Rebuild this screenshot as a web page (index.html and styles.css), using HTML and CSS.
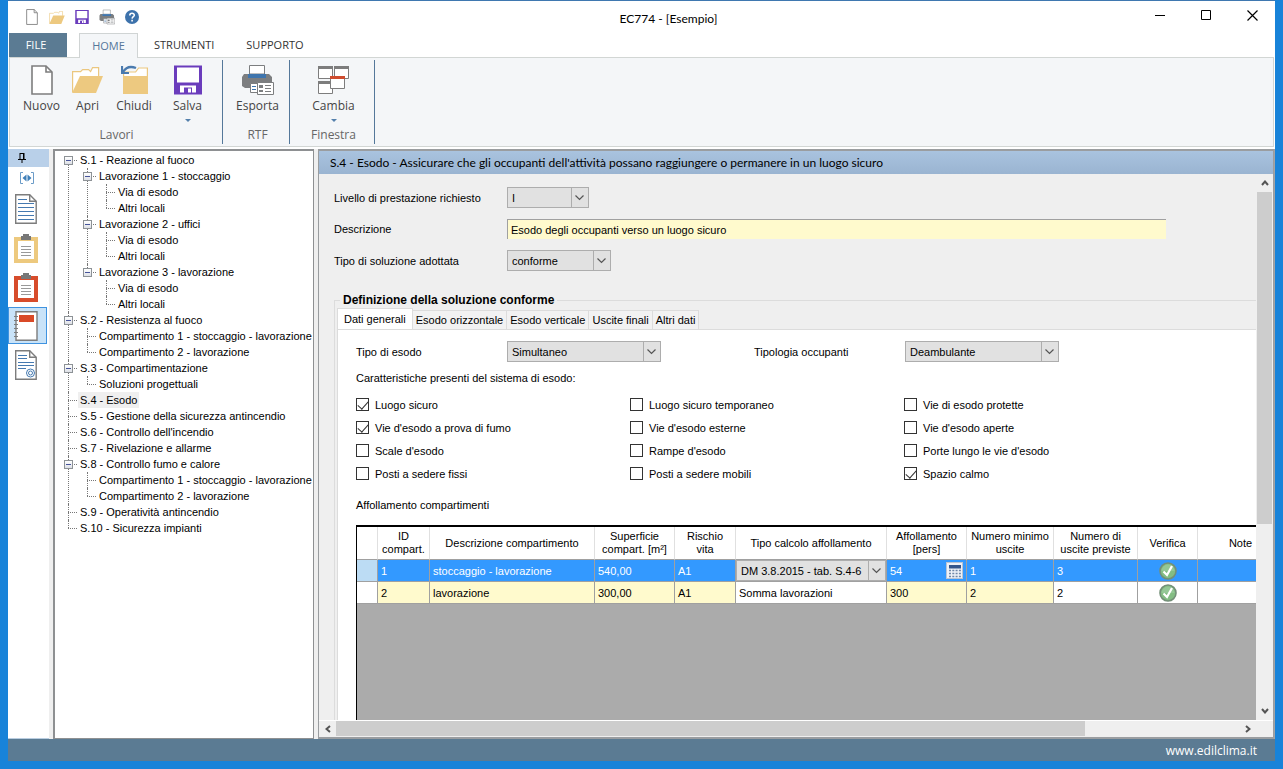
FILE: index.html
```html
<!DOCTYPE html>
<html lang="it">
<head>
<meta charset="utf-8">
<title>EC774 - [Esempio]</title>
<link rel="stylesheet" href="styles.css">
</head>
<body>
<svg class="defs" aria-hidden="true">
  <symbol id="i-new" viewBox="0 0 22 30"><path d="M1 1h14l6 6v22H1z" fill="#fff" stroke="#7d7d7d" stroke-width="1.6"/><path d="M15 1v6h6" fill="none" stroke="#7d7d7d" stroke-width="1.6"/></symbol>
  <symbol id="i-open" viewBox="0 0 31 26"><path d="M.6 25V4.600h8l2-2h6l2 2h0l2-4h6v9" fill="#fff" stroke="#ebc77f" stroke-width="1.2"/><path d="M8 9h23l-7 17H0z" fill="#edc980"/></symbol>
  <symbol id="i-close" viewBox="0 0 27 30"><path d="M2.600 13V7h12l3-4h8.800v10" fill="#fff" stroke="#ebc77f" stroke-width="1.2"/><path d="M2 11h25v18H2z" fill="#edc980"/><path d="M2 7C5 2 10 1 15 3" fill="none" stroke="#4a7aae" stroke-width="2.4"/><path d="M1 1v7h7" fill="none" stroke="#4a7aae" stroke-width="2.2"/></symbol>
  <symbol id="i-save" viewBox="0 0 28 29"><path d="M0 0h28v29H0z" fill="#6a3cbc"/><path d="M3 2h22v15H3zM6 20h16v7H6z" fill="#fff"/><path d="M10 22h8v6h-8z" fill="#6a3cbc"/><path d="M14 23h3v4h-3z" fill="#fff"/></symbol>
  <symbol id="i-print" viewBox="0 0 33 30"><path d="M3 9h5v4h15V9h5l3 3v9l-3 2H4l-3-2v-9z" fill="#7c7e80"/><path d="M8.500.5h15V9h-15z" fill="#fff" stroke="#7c7e80"/><path d="M7 9h18v4H7z" fill="#3f75ad"/><path d="M9.500 18.500h8v9h-8z" fill="#fff" stroke="#7c7e80"/><path d="M11 21.500h4M11 24.500h4" stroke="#3f75ad"/><path d="M16.500 17.500h16v12h-16z" fill="#fff" stroke="#7c7e80"/><path d="M18 20h4v3h-4zM18 25h4v2h-4z" fill="#7c7e80"/><path d="M24 20.500h6M24 23.500h6M24 26.500h6" stroke="#7c7e80"/></symbol>
  <symbol id="i-windows" viewBox="0 0 32 28"><g fill="#fff" stroke="#7d7d7d"><path d="M.5.5h14v12H.5zM16.500.5h14v12h-14zM.5 15.500h14v12H.5z"/></g><path d="M0 0h15v3H0zM16 0h15v3H16zM0 15h15v3H0z" fill="#7d7d7d"/><path d="M12.500 10.500h14v12h-14z" fill="#fff" stroke="#7d7d7d"/><path d="M12 10h15v3H12z" fill="#cf4c2e"/></symbol>
  <symbol id="i-clip" viewBox="0 0 24 29"><path d="M0 3h24v26H0z" fill="currentColor"/><path d="M4 7h16v18H4z" fill="#fff"/><path d="M7 2h2V0h6v2h2v4H7z" fill="#777"/><path d="M7 12.500h10M7 15.500h10M7 18.500h10M7 21.500h10" stroke="#999" stroke-width="1.2"/></symbol>
  <symbol id="i-check" viewBox="0 0 18 18"><circle cx="9" cy="9" r="8" fill="#83bd83" stroke="#738f78" stroke-width="1.600"/><path d="M2.500 9a6.500 6.500 0 0 1 13 0z" fill="#94c796"/><path d="M4.500 9.500 8 13l5-9" fill="none" stroke="#fff" stroke-width="2.200"/></symbol>
  <symbol id="i-chev" viewBox="0 0 9 6"><path d="m.5.5 4 4 4-4" fill="none" stroke="#555" stroke-width="1.2"/></symbol>
  <symbol id="i-scroll" viewBox="0 0 8 6"><path d="m1 5 3-3.500L7 5" fill="none" stroke="#555" stroke-width="2"/></symbol>
</svg>

<div class="window">
  <header class="titlebar">
    <div class="quick">
      <button class="qbtn" aria-label="Nuovo"><svg class="q-new"><use href="#i-new"/></svg></button>
      <button class="qbtn" aria-label="Apri"><svg class="q-open"><use href="#i-open"/></svg></button>
      <button class="qbtn" aria-label="Salva"><svg class="q-save"><use href="#i-save"/></svg></button>
      <button class="qbtn" aria-label="Esporta"><svg class="q-print"><use href="#i-print"/></svg></button>
      <button class="qbtn" aria-label="Guida"><svg class="q-help" viewBox="0 0 14 14"><circle cx="7" cy="7" r="7" fill="#3d72ab"/><path d="M4.800 5.500C4.800 2.500 9.400 2.700 9.300 5.300 9.200 6.800 7.200 6.700 7.100 8.600M7.100 9.800v1.700" fill="none" stroke="#fff" stroke-width="1.600"/></svg></button>
    </div>
    <h1 class="title">EC774 - [Esempio]</h1>
    <div class="controls">
      <button aria-label="Riduci"><svg viewBox="0 0 11 11"><path d="M0 5.500h10" stroke="#000"/></svg></button>
      <button aria-label="Ingrandisci"><svg viewBox="0 0 11 11"><path d="M.5.5h9v9h-9z" fill="none" stroke="#000"/></svg></button>
      <button aria-label="Chiudi finestra"><svg viewBox="0 0 11 11"><path d="m.5.5 10 10m0-10-10 10" stroke="#000" stroke-width="1.200"/></svg></button>
    </div>
  </header>

  <nav class="menu">
    <button class="file">FILE</button>
    <button class="active">HOME</button>
    <button>STRUMENTI</button>
    <button>SUPPORTO</button>
  </nav>

  <section class="ribbon">
    <div class="group g-lavori">
      <div class="tools">
        <button class="tool t-nuovo"><svg class="r-new"><use href="#i-new"/></svg><span>Nuovo</span></button>
        <button class="tool t-apri"><svg class="r-open"><use href="#i-open"/></svg><span>Apri</span></button>
        <button class="tool t-chiudi"><svg class="r-close"><use href="#i-close"/></svg><span>Chiudi</span></button>
        <button class="tool t-salva"><svg class="r-save"><use href="#i-save"/></svg><span>Salva</span><i class="drop"></i></button>
      </div>
      <div class="group-name">Lavori</div>
    </div>
    <div class="group g-rtf">
      <div class="tools"><button class="tool"><svg class="r-print"><use href="#i-print"/></svg><span>Esporta</span></button></div>
      <div class="group-name">RTF</div>
    </div>
    <div class="group g-finestra">
      <div class="tools"><button class="tool"><svg class="r-windows"><use href="#i-windows"/></svg><span>Cambia</span><i class="drop"></i></button></div>
      <div class="group-name">Finestra</div>
    </div>
  </section>

  <div class="main">
    <aside class="strip">
      <button class="pin" aria-label="Blocca"><svg viewBox="0 0 8 10"><path d="M2 0v6M2 .5h3.500M0 6.500h8M4 7v3" fill="none" stroke="#000"/><path d="M5 0h1.500v6H5z"/></svg></button>
      <button class="expand" aria-label="Espandi"><svg viewBox="0 0 14 12"><path d="M3 .5H.5v11H3M11 .5h2.500v11H11" fill="none" stroke="#6c9cc8"/><path d="M6.500 2.500 2.500 6l4 3.500zM7.500 2.500l4 3.500-4 3.500z" fill="#3f7fb8"/></svg></button>
      <button class="side" aria-label="Documento"><svg class="s-doc" viewBox="0 0 22 30"><path d="M.7.700h14l6.500 6.500v22H.7z" fill="#fff" stroke="#7d7d7d" stroke-width="1.400"/><path d="M14.700.700v6.500h6.500" fill="none" stroke="#7d7d7d" stroke-width="1.400"/><path d="M3 5.500h9M3 9.500h16M3 13.500h16M3 17.500h16M3 21.500h16M3 25.500h16" stroke="#4579b0"/></svg></button>
      <button class="side" aria-label="Appunti"><svg class="s-clip tan"><use href="#i-clip"/></svg></button>
      <button class="side" aria-label="Verifiche"><svg class="s-clip red"><use href="#i-clip"/></svg></button>
      <button class="side selected" aria-label="Strategia"><svg class="s-note" viewBox="0 0 24 30"><path d="M2 .7h21v28.600H2z" fill="#fff" stroke="#7d7d7d" stroke-width="1.400"/><path d="M5 4h15v7H5z" fill="#d94a28"/><path d="M0 5.500h4M0 9.500h4M0 13.500h4M0 17.500h4M0 21.500h4M0 25.500h4" stroke="#7d7d7d"/></svg></button>
      <button class="side" aria-label="Certificato"><svg class="s-doc" viewBox="0 0 22 30"><path d="M.7.700h14l6.500 6.500v22H.7z" fill="#fff" stroke="#7d7d7d" stroke-width="1.400"/><path d="M14.700.700v6.500h6.500" fill="none" stroke="#7d7d7d" stroke-width="1.400"/><path d="M3 5.500h9M3 8.500h9M3 12.500h16M3 15.500h16M3 18.500h8" stroke="#4579b0"/><circle cx="15.500" cy="23" r="4" fill="#fff" stroke="#4579b0"/><circle cx="15.500" cy="23" r="2" fill="none" stroke="#4579b0"/></svg></button>
    </aside>

    <nav class="tree-pane">
      <ul class="tree">
        <li><div class="row"><button class="toggle" aria-label="Comprimi"></button><span>S.1 - Reazione al fuoco</span></div>
          <ul>
            <li><div class="row"><button class="toggle" aria-label="Comprimi"></button><span>Lavorazione 1 - stoccaggio</span></div>
              <ul><li><div class="row"><span>Via di esodo</span></div></li><li><div class="row"><span>Altri locali</span></div></li></ul></li>
            <li><div class="row"><button class="toggle" aria-label="Comprimi"></button><span>Lavorazione 2 - uffici</span></div>
              <ul><li><div class="row"><span>Via di esodo</span></div></li><li><div class="row"><span>Altri locali</span></div></li></ul></li>
            <li><div class="row"><button class="toggle" aria-label="Comprimi"></button><span>Lavorazione 3 - lavorazione</span></div>
              <ul><li><div class="row"><span>Via di esodo</span></div></li><li><div class="row"><span>Altri locali</span></div></li></ul></li>
          </ul></li>
        <li><div class="row"><button class="toggle" aria-label="Comprimi"></button><span>S.2 - Resistenza al fuoco</span></div>
          <ul><li><div class="row"><span>Compartimento 1 - stoccaggio - lavorazione</span></div></li><li><div class="row"><span>Compartimento 2 - lavorazione</span></div></li></ul></li>
        <li><div class="row"><button class="toggle" aria-label="Comprimi"></button><span>S.3 - Compartimentazione</span></div>
          <ul><li><div class="row"><span>Soluzioni progettuali</span></div></li></ul></li>
        <li><div class="row"><span class="current">S.4 - Esodo</span></div></li>
        <li><div class="row"><span>S.5 - Gestione della sicurezza antincendio</span></div></li>
        <li><div class="row"><span>S.6 - Controllo dell'incendio</span></div></li>
        <li><div class="row"><span>S.7 - Rivelazione e allarme</span></div></li>
        <li><div class="row"><button class="toggle" aria-label="Comprimi"></button><span>S.8 - Controllo fumo e calore</span></div>
          <ul><li><div class="row"><span>Compartimento 1 - stoccaggio - lavorazione</span></div></li><li><div class="row"><span>Compartimento 2 - lavorazione</span></div></li></ul></li>
        <li><div class="row"><span>S.9 - Operatività antincendio</span></div></li>
        <li><div class="row"><span>S.10 - Sicurezza impianti</span></div></li>
      </ul>
    </nav>

    <main class="content">
      <h2 class="heading">S.4 - Esodo - Assicurare che gli occupanti dell'attività possano raggiungere o permanere in un luogo sicuro</h2>
      <div class="view">
        <div class="page">
          <div class="form">
            <label for="livello">Livello di prestazione richiesto</label>
            <span class="combo w-small"><select id="livello"><option>I</option></select><svg class="chev"><use href="#i-chev"/></svg></span>
            <label for="descr">Descrizione</label>
            <input class="text" id="descr" type="text" value="Esodo degli occupanti verso un luogo sicuro">
            <label for="tipo">Tipo di soluzione adottata</label>
            <span class="combo w-medium"><select id="tipo"><option>conforme</option></select><svg class="chev"><use href="#i-chev"/></svg></span>
          </div>

          <fieldset class="solution">
            <legend>Definizione della soluzione conforme</legend>
            <div class="tabs" role="tablist">
              <button role="tab" aria-selected="true" class="on">Dati generali</button>
              <button role="tab">Esodo orizzontale</button>
              <button role="tab">Esodo verticale</button>
              <button role="tab">Uscite finali</button>
              <button role="tab">Altri dati</button>
            </div>
            <div class="panel">
              <div class="pair">
                <label for="esodo">Tipo di esodo</label>
                <span class="combo w-large"><select id="esodo"><option>Simultaneo</option></select><svg class="chev"><use href="#i-chev"/></svg></span>
                <label for="occupanti">Tipologia occupanti</label>
                <span class="combo w-large"><select id="occupanti"><option>Deambulante</option></select><svg class="chev"><use href="#i-chev"/></svg></span>
              </div>
              <p class="caption">Caratteristiche presenti del sistema di esodo:</p>
              <div class="checks">
                <label><input type="checkbox" checked>Luogo sicuro</label>
                <label><input type="checkbox">Luogo sicuro temporaneo</label>
                <label><input type="checkbox">Vie di esodo protette</label>
                <label><input type="checkbox" checked>Vie d'esodo a prova di fumo</label>
                <label><input type="checkbox">Vie d'esodo esterne</label>
                <label><input type="checkbox">Vie d'esodo aperte</label>
                <label><input type="checkbox">Scale d'esodo</label>
                <label><input type="checkbox">Rampe d'esodo</label>
                <label><input type="checkbox">Porte lungo le vie d'esodo</label>
                <label><input type="checkbox">Posti a sedere fissi</label>
                <label><input type="checkbox">Posti a sedere mobili</label>
                <label><input type="checkbox" checked>Spazio calmo</label>
              </div>
              <p class="caption">Affollamento compartimenti</p>
              <div class="grid">
                <table>
                  <colgroup><col class="c-head"><col class="c-id"><col class="c-descr"><col class="c-sup"><col class="c-risk"><col class="c-calc"><col class="c-aff"><col class="c-min"><col class="c-prev"><col class="c-ver"><col class="c-note"></colgroup>
                  <thead><tr><th></th><th>ID<br>compart.</th><th>Descrizione compartimento</th><th>Superficie<br>compart. [m²]</th><th>Rischio<br>vita</th><th>Tipo calcolo affollamento</th><th>Affollamento<br>[pers]</th><th>Numero minimo<br>uscite</th><th>Numero di<br>uscite previste</th><th>Verifica</th><th>Note</th></tr></thead>
                  <tbody>
                    <tr class="picked"><td class="rowhead"></td><td>1</td><td>stoccaggio - lavorazione</td><td>540,00</td><td>A1</td>
                      <td class="cell-combo"><span class="combo"><select aria-label="Tipo calcolo affollamento"><option>DM 3.8.2015 - tab. S.4-6</option></select><svg class="chev"><use href="#i-chev"/></svg></span></td>
                      <td class="cell-calc"><div class="calc">54<button aria-label="Calcola"><svg viewBox="0 0 14 14"><path d="M1 1h12v3.500H1z" fill="#34568c"/><path d="M1 6.500h12M1 9.500h12M1 12.500h12" stroke="#7088a8" stroke-width="1.600" stroke-dasharray="2 1.300"/></svg></button></div></td>
                      <td>1</td><td>3</td><td class="ok"><svg><use href="#i-check"/></svg></td><td></td></tr>
                    <tr class="plain"><td class="rowhead"></td><td class="ro">2</td><td class="ro">lavorazione</td><td class="ro">300,00</td><td class="ro">A1</td><td>Somma lavorazioni</td><td class="ro">300</td><td class="ro">2</td><td>2</td><td class="ok"><svg><use href="#i-check"/></svg></td><td></td></tr>
                  </tbody>
                </table>
              </div>
            </div>
          </fieldset>
        </div>
        <div class="vbar"><button aria-label="Su"><svg><use href="#i-scroll"/></svg></button><div class="vtrack"><div class="vthumb"></div></div><button class="down" aria-label="Giù"><svg><use href="#i-scroll"/></svg></button></div>
      </div>
      <div class="hbar"><button class="left" aria-label="Sinistra"><svg><use href="#i-scroll"/></svg></button><div class="htrack"><div class="hthumb"></div></div><button class="right" aria-label="Destra"><svg><use href="#i-scroll"/></svg></button></div>
    </main>
  </div>

  <footer class="status"><a href="#">www.edilclima.it</a></footer>
</div>
</body>
</html>
```

FILE: styles.css
```css
* { box-sizing: border-box; }
body {
  margin: 0;
  background: #1883d9;
  color: #000;
  font: 11px/16px "Liberation Sans", Arial, sans-serif;
}
button, input, select { font: inherit; color: inherit; margin: 0; padding: 0; border: 0; background: none; border-radius: 0; }
svg { display: block; }
ul { list-style: none; margin: 0; padding: 0; }
.defs { position: absolute; width: 0; height: 0; }

.window {
  display: flex;
  flex-direction: column;
  height: 100vh;
  border: solid #1883d9;
  border-width: 0 8px 8px;
  background: #fff;
}

/* Title bar */
.titlebar { display: flex; height: 33px; border-top: 1px solid #3f78b0; font-family: Lato, "Open Sans", sans-serif; }
.quick { display: flex; align-items: center; width: 192px; padding-left: 11px; }
.qbtn { display: grid; place-items: center; width: 25px; height: 24px; }
.q-new { width: 12px; height: 16px; }
.q-open { width: 16px; height: 13px; }
.q-save { width: 14px; height: 14px; }
.q-print { width: 16px; height: 16px; }
.q-help { width: 14px; height: 14px; }
.title { flex: 1; margin: 0; font-size: 12px; font-weight: 400; line-height: 35px; text-align: center; }
.controls { display: flex; }
.controls button { display: grid; place-items: center; width: 46px; height: 29px; }
.controls svg { width: 11px; height: 11px; }

/* Ribbon tabs */
.menu { display: flex; height: 24px; padding-left: 1px; font: 11px/24px "Open Sans", sans-serif; color: #333; }
.menu button { padding: 0 16px; }
.menu .file { width: 58px; margin-right: 12px; padding: 0 4px 0 0; background: #5b7b93; color: #fff; }
.menu .active {
  position: relative;
  width: 59px;
  height: 25px;
  padding: 0;
  border: 1px solid #d0d4d4;
  border-bottom: 0;
  background: #f4f6f8;
  color: #55779a;
}

/* Ribbon */
.ribbon {
  display: flex;
  height: 90px;
  margin: 0 1px 2px;
  padding: 2px 0;
  border: 1px solid #d2d6d4;
  background: #f4f6f8;
  font: 12px/16px "Open Sans", sans-serif;
  color: #444;
}
.group { display: flex; flex-direction: column; padding-left: 3px; border-right: 1px solid #54789a; }
.g-lavori { padding: 0 6px 0 7px; }
.g-rtf { width: 67px; }
.g-finestra { width: 85px; }
.tools { display: flex; flex: 1; justify-content: center; padding-top: 5px; }
.tool { display: flex; flex-direction: column; align-items: center; }
.tool span { margin-top: 3px; }
.t-nuovo { width: 49px; }
.t-apri { width: 43px; }
.t-chiudi { width: 50px; }
.t-salva { width: 57px; }
.tool svg { height: 30px; }
.r-new { width: 22px; }
.r-open { width: 31px; }
.r-close { width: 27px; }
.r-save { width: 28px; }
.r-print { width: 33px; }
.r-windows { width: 32px; }
.drop { margin-top: 5px; border: 3px solid transparent; border-top-color: #5480ac; border-bottom: 0; }
.group-name { height: 17px; line-height: 16px; text-align: center; color: #666; }

/* Body layout */
.main { display: flex; flex: 1; min-height: 0; background: #efefef; border-right: 1px solid #a0a4a8; }
.strip { display: flex; flex-direction: column; width: 41px; background: #fff; border-bottom: 1px solid #b9cde0; }
.pin { display: grid; place-items: center start; height: 18px; padding-left: 10px; background: #b9d0e9; }
.pin svg { width: 8px; height: 10px; }
.expand { display: grid; place-items: center; width: 38px; height: 22px; }
.expand svg { width: 14px; height: 12px; }
.side { display: grid; place-items: center; width: 39px; height: 38px; margin-top: 1px; padding-right: 3px; border: 1px solid transparent; }
.side.selected { height: 37px; border-color: #3f93e0; background: #c9e3f8; }
.selected + .side { margin-top: 2px; }
.s-doc { width: 22px; height: 30px; }
.s-clip { width: 24px; height: 29px; }
.s-note { width: 24px; height: 30px; }
.tan { color: #edc97e; }
.red { color: #d74c2b; }

/* Tree */
.tree-pane { width: 261px; margin: 0 4px; padding: 1px 0 0 6px; border: 2px solid #8e9092; border-width: 2px 1px 1px 2px; background: #fff; white-space: nowrap; overflow: hidden; }
.tree li { position: relative; }
.tree li li { margin-left: 19px; }
.row { display: flex; align-items: center; height: 16px; padding-left: 17px; }
.row span { padding: 0 2px; }
.row .current { background: #efefef; }
.tree li::before, .tree li::after { content: ""; position: absolute; left: 7px; }
.tree li::before { top: 8px; width: 9px; border-top: 1px dotted #777; }
.tree li::after { top: 0; bottom: 0; border-left: 1px dotted #777; }
.tree > li:first-child::after { top: 8px; }
.tree li:last-child::after { bottom: auto; height: 8px; }
.toggle {
  position: relative;
  z-index: 1;
  width: 9px;
  height: 9px;
  margin: 0 5px 0 -14px;
  border: 1px solid #8d9296;
  background: linear-gradient(#46549a, #46549a) center / 5px 1px no-repeat, linear-gradient(#fff, #dde0e6);
}

/* Content */
.content { display: flex; flex: 1; flex-direction: column; min-width: 0; border: solid #9a9da0; border-width: 2px 1px 2px; }
.heading { margin: 0; padding-left: 11px; background: linear-gradient(#a9c3df, #9ab4d1); font: 12px/23px Lato, "Open Sans", sans-serif; white-space: nowrap; overflow: hidden; }
.view { display: flex; flex: 1; min-height: 0; }
.page { display: flex; flex: 1; flex-direction: column; min-width: 0; padding: 13px 0 0 15px; overflow: hidden; }
.form { display: grid; grid-template-columns: 173px 1fr; row-gap: 11px; align-items: center; padding-right: 90px; }
.combo { position: relative; display: flex; height: 21px; border: 1px solid #adadad; background: #e1e1e1; }
.combo select { flex: 1; appearance: none; padding: 0 18px 0 4px; outline: 0; }
.combo::after { content: ""; position: absolute; top: 0; bottom: 0; right: 16px; border-left: 1px solid #adadad; pointer-events: none; }
.chev { position: absolute; top: 7px; right: 4px; width: 9px; height: 6px; pointer-events: none; }
.w-small { width: 82px; }
.w-medium { width: 104px; }
.w-large { width: 154px; }
.text { height: 20px; padding: 0 3px; border: solid #a0a0a0; border-width: 1px 0 0 1px; background: #fffacd; outline: 0; }

.solution { display: flex; flex: 1; flex-direction: column; min-width: 0; min-height: 0; margin: 21px 0 0; padding: 0 0 0 2px; border: 1px solid #dcdcdc; border-width: 1px 0 0 1px; }
.solution legend { margin-left: 3px; padding: 0 3px; font-size: 12px; font-weight: 700; }
.tabs { display: flex; align-items: flex-end; height: 21px; }
.tabs button { height: 19px; padding: 0 3px; border: 1px solid #dcdcdc; border-bottom: 0; border-left: 0; background: #f2f2f2; }
.tabs .on { position: relative; height: 21px; padding: 0 6px; border-left: 1px solid #dcdcdc; background: #fff; }
.panel { display: flex; flex: 1; flex-direction: column; min-height: 0; padding: 11px 0 0 18px; border: 1px solid #dcdcdc; border-width: 1px 0 0 1px; background: #fff; }
.pair { display: grid; grid-template-columns: 151px 247px 151px 1fr; align-items: center; }
.caption { margin: 8px 0 7px; }
.checks { display: grid; grid-template-columns: 274px 274px 1fr; grid-auto-rows: 23px; margin-bottom: 4px; }
.checks label { display: flex; align-items: center; gap: 6px; }
.checks input { appearance: none; display: grid; justify-items: center; width: 13px; height: 13px; border: 1px solid #333; background: #fff; }
.checks input:checked::before { content: ""; width: 5px; height: 9px; border: solid #333; border-width: 0 1px 1px 0; transform: rotate(42deg); }

/* Data grid */
.grid { flex: 1; min-height: 0; margin-top: 5px; border: solid #000; border-width: 2px 0 0 1px; background: #ababab; overflow: hidden; }
.grid table { width: 927px; table-layout: fixed; border-collapse: separate; border-spacing: 0; }
.c-head { width: 21px; }
.c-id { width: 52px; }
.c-descr { width: 165px; }
.c-sup { width: 80px; }
.c-risk { width: 61px; }
.c-calc { width: 151px; }
.c-aff { width: 80px; }
.c-min { width: 87px; }
.c-prev { width: 84px; }
.c-ver { width: 60px; }
.c-note { width: 86px; }
.grid th { height: 33px; padding: 0; border: solid #e0e0e0; border-width: 0 1px 0 0; border-bottom: 1px solid #a0a0a0; background: #fff; font-weight: 400; line-height: 13px; white-space: nowrap; }
.grid td { height: 22px; padding: 0 3px; border: solid #a0a0a0; border-width: 0 1px 1px 0; background: #fff; line-height: 16px; white-space: nowrap; }
.grid .ro { background: #fffacd; }
.grid .picked td { background: #3399ff; color: #fff; }
.grid .picked .rowhead { background: #bcdcf4; }
.grid .picked .cell-combo { padding: 0; color: #000; }
.cell-calc .calc { display: flex; justify-content: space-between; align-items: center; }
.calc button { display: grid; place-items: center; width: 17px; height: 17px; border: 1px solid #b8c4d4; background: #eef2f8; }
.calc svg { width: 14px; height: 14px; }
.ok svg { width: 18px; height: 18px; margin: 0 auto; }

/* Scroll bars */
.vbar { display: flex; flex-direction: column; width: 17px; }
.vbar button { display: grid; place-items: center; height: 18px; }
.vbar svg, .hbar svg { width: 8px; height: 6px; }
.vtrack { flex: 1; padding: 0 1px; }
.vthumb { height: 65%; background: #cdcdcd; }
.down svg { transform: rotate(180deg); }
.hbar { display: flex; height: 17px; border-top: 1px solid #fff; }
.hbar button { display: grid; place-items: center; width: 17px; }
.htrack { flex: 1; padding-bottom: 1px; }
.hthumb { width: 83%; height: 100%; background: #cdcdcd; }
.hbar .right { margin-right: 17px; }
.left svg { transform: rotate(-90deg); }
.right svg { transform: rotate(90deg); }

/* Status bar */
.status { height: 22px; padding-right: 18px; background: #5b7b93; font: 12px/24px "Open Sans", sans-serif; text-align: right; }
.status a { color: #fff; text-decoration: none; }
```
